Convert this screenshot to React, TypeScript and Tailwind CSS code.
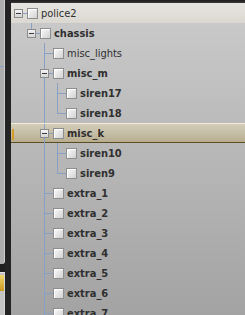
import React from 'react';

type Row = {
  label: string;
  level: number;
  expander?: boolean;
  bold?: boolean;
  selected?: boolean;
  lines: { x: number; half?: boolean; top?: boolean }[];
};

const INDENT = ['pl-[3px]', 'pl-[16px]', 'pl-[29px]', 'pl-[42px]'];
const LINE_X: Record<number, string> = { 20: 'left-[20px]', 33: 'left-[33px]', 46: 'left-[46px]' };

const extras = Array.from({ length: 8 }, (_, i) => ({
  label: `extra_${i + 1}`,
  level: 2,
  bold: true,
  lines: [{ x: 33 }],
}));

const ROWS: Row[] = [
  { label: 'police2', level: 0, expander: true, lines: [] },
  { label: 'chassis', level: 1, expander: true, bold: true, lines: [{ x: 20, top: true }] },
  { label: 'misc_lights', level: 2, lines: [{ x: 33 }] },
  { label: 'misc_m', level: 2, expander: true, bold: true, lines: [{ x: 33 }] },
  { label: 'siren17', level: 3, bold: true, lines: [{ x: 33 }, { x: 46 }] },
  { label: 'siren18', level: 3, bold: true, lines: [{ x: 33 }, { x: 46, half: true }] },
  { label: 'misc_k', level: 2, expander: true, bold: true, selected: true, lines: [{ x: 33 }] },
  { label: 'siren10', level: 3, bold: true, lines: [{ x: 33 }, { x: 46 }] },
  { label: 'siren9', level: 3, bold: true, lines: [{ x: 33 }, { x: 46, half: true }] },
  ...extras,
];

function Expander() {
  return (
    <div className="relative z-10 flex h-[9px] w-[9px] items-center justify-center border border-[#8c8c8c] bg-gradient-to-b from-[#f4f4f4] to-[#d4d4d4]">
      <div className="h-px w-[5px] bg-[#3a3a3a]" />
    </div>
  );
}

function Checkbox() {
  return (
    <div className="h-[11px] w-[11px] shrink-0 border border-[#8e8e8e] bg-gradient-to-br from-[#fafafa] to-[#d2d2d2] shadow-[inset_1px_1px_0_#ffffff]" />
  );
}

function TreeRow({ row }: { row: Row }) {
  const bg = row.selected
    ? 'bg-gradient-to-b from-[#d2ccb9] via-[#c6bfa7] to-[#b7ac8e] border-t border-t-[#f1ebd8] border-b border-b-[#5b4c26]'
    : row.level === 0
      ? 'bg-gradient-to-b from-[#e7e5df] to-[#dad8d1]'
      : '';
  return (
    <div className={`relative flex h-5 shrink-0 items-center ${INDENT[row.level]} ${bg}`}>
      {row.selected && <div className="absolute left-px top-[5px] h-[11px] w-[2px] bg-[#d39b27]" />}
      {row.lines.map((l, i) => (
        <div
          key={i}
          className={`absolute w-px bg-[#86a0c6] ${LINE_X[l.x]} ${
            l.top ? 'top-0 h-[6px]' : l.half ? 'top-0 h-[10px]' : 'top-0 h-5'
          } ${row.selected ? '-top-px' : ''}`}
        />
      ))}
      <div className="flex w-[13px] items-center">
        {row.expander ? (
          <>
            <Expander />
            <div className="h-px w-[4px] bg-[#86a0c6]" />
          </>
        ) : (
          <div className="ml-[4px] h-px w-[9px] bg-[#86a0c6]" />
        )}
      </div>
      <Checkbox />
      <span
        className={`ml-[3px] whitespace-nowrap text-[11px] leading-none text-[#2f2f2f] font-['DejaVu_Sans_Condensed','DejaVu_Sans',sans-serif] [font-stretch:condensed] ${
          row.bold ? 'font-bold' : ''
        }`}
      >
        {row.label}
      </span>
    </div>
  );
}

export default function App() {
  return (
    <div className="flex h-[315px] w-[245px] overflow-hidden bg-[#1f1f1f]">
      <div className="flex w-[5px] shrink-0 flex-col">
        <div className="relative h-[264px] shrink-0 rounded-br-[3px] border-r border-r-[#cfcfcf] bg-[#adadad]">
          <div className="absolute left-0 top-[66px] h-px w-[4px] bg-[#86a0c6]" />
        </div>
        <div className="mt-[8px] flex flex-1 flex-col border-t border-t-[#e2e2e2] border-r border-r-[#d4d4d4] bg-[#c4c4c4]">
          <div className="mt-[2px] h-[16px] bg-gradient-to-b from-[#f3d56a] to-[#c99a1c]" />
        </div>
      </div>
      <div className="w-[6px] shrink-0 bg-[#232323]" />
      <div className="flex min-w-0 flex-1 flex-col">
        <div className="h-[3px] shrink-0 bg-gradient-to-b from-[#1c1c1c] to-[#3a3a3a]" />
        <div className="flex min-h-0 flex-1 flex-col overflow-hidden bg-gradient-to-b from-[#cbcbcb] to-[#a3a3a3]">
          {ROWS.map((r) => (
            <TreeRow key={r.label} row={r} />
          ))}
        </div>
      </div>
    </div>
  );
}
